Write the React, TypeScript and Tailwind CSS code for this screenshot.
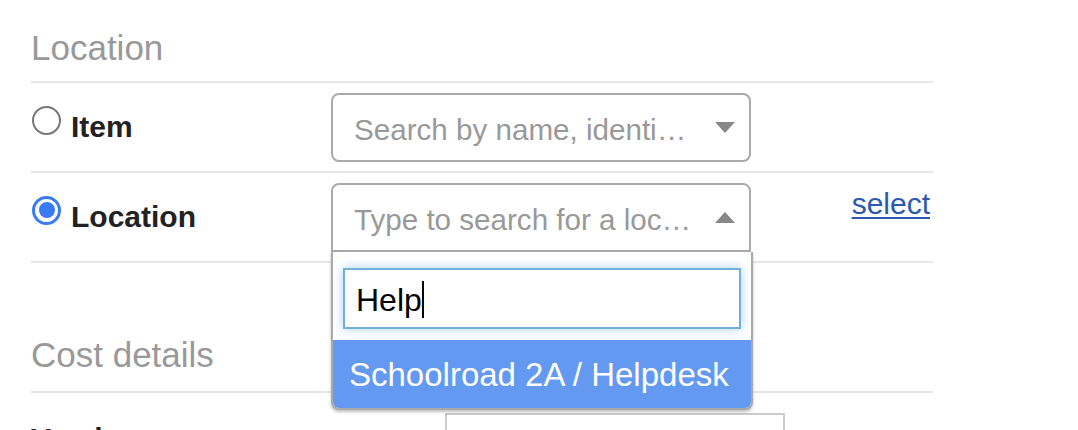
import React from "react";

function Caret({ up }: { up?: boolean }) {
  return (
    <svg width="20" height="11" viewBox="0 0 20 11" className="shrink-0 ml-[21px]">
      {up ? <polygon points="0,11 20,11 10,0" fill="#888" /> : <polygon points="0,0 20,0 10,11" fill="#888" />}
    </svg>
  );
}

export default function App() {
  return (
    <div className="w-[1078px] h-[430px] overflow-hidden bg-white font-['Liberation_Sans',Arial,sans-serif]">
      <div className="ml-[31px] w-[902px]">
        <div className="h-[83px] box-border border-b-2 border-[#e6e6e6] pt-[28px] text-[35px] leading-[40px] text-[#999]">
          Location
        </div>

        <div className="h-[90px] box-border border-b-2 border-[#e6e6e6] flex items-center">
          <div className="w-[300px] flex items-center">
            <span className="ml-px mr-[10px] mb-[14px] w-[29px] h-[29px] rounded-full border-2 border-[#777] box-border" />
            <span className="text-[30px] leading-[34px] font-bold text-[#222]">Item</span>
          </div>
          <div className="w-[420px] h-[69px] box-border border-2 border-[#aaa] rounded-[8px] flex items-center pl-[21px] pr-[14px]">
            <span className="flex-1 min-w-0 truncate mt-[5px] text-[29.6px] leading-[38px] text-[#999]">
              Search by name, identifier or serial number
            </span>
            <Caret />
          </div>
        </div>

        <div className="h-[90px] box-border border-b-2 border-[#e6e6e6] flex items-center">
          <div className="w-[300px] flex items-center">
            <span className="ml-px mr-[10px] mb-[14px] w-[29px] h-[29px] rounded-full border-[3px] border-[#3a7bf4] box-border flex items-center justify-center">
              <span className="w-[16px] h-[16px] rounded-full bg-[#3a7bf4]" />
            </span>
            <span className="text-[30px] leading-[34px] font-bold text-[#222]">Location</span>
          </div>
          <div className="relative">
            <div className="w-[420px] h-[69px] box-border border-2 border-[#aaa] rounded-t-[8px] flex items-center pl-[21px] pr-[14px]">
              <span className="flex-1 min-w-0 truncate mt-[5px] text-[29.6px] leading-[38px] text-[#999]">
                Type to search for a location
              </span>
              <Caret up />
            </div>
            <div className="absolute left-0 top-full z-10 w-[422px] box-border bg-white border-2 border-t-0 border-[#aaa] rounded-b-[8px] shadow-[0_2px_3px_rgba(0,0,0,0.25)]">
              <div className="pt-[16px] pb-[11px] pl-[10px] pr-[10px]">
                <div className="h-[61px] box-border border-2 border-[#72b0da] shadow-[0_0_10px_rgba(102,175,233,0.55)] bg-white flex items-center pl-[11px] pt-[3px]">
                  <span className="text-[32px] leading-[38px] text-black">Help</span>
                  <span className="w-[2px] h-[37px] bg-black" />
                </div>
              </div>
              <div className="h-[68px] bg-[#6499f2] rounded-b-[6px] flex items-center pl-[16px] pt-[2px] text-[33px] leading-[38px] text-white">
                Schoolroad 2A / Helpdesk
              </div>
            </div>
          </div>
          <div className="flex-1 self-start mt-[14px] pr-[3px] text-right">
            <a href="#" className="text-[30px] leading-[34px] text-[#2a58b2] underline decoration-2 underline-offset-[3px]">
              select
            </a>
          </div>
        </div>

        <div className="h-[130px] box-border border-b-2 border-[#e6e6e6] pt-[72px] text-[35px] leading-[40px] text-[#999]">
          Cost details
        </div>

        <div className="flex pt-[20px]">
          <div className="w-[414px] mt-[9px] text-[30px] leading-[34px] font-bold text-[#222]">Vendor</div>
          <div className="w-[340px] h-[60px] box-border border-2 border-[#ccc]" />
        </div>
      </div>
    </div>
  );
}
